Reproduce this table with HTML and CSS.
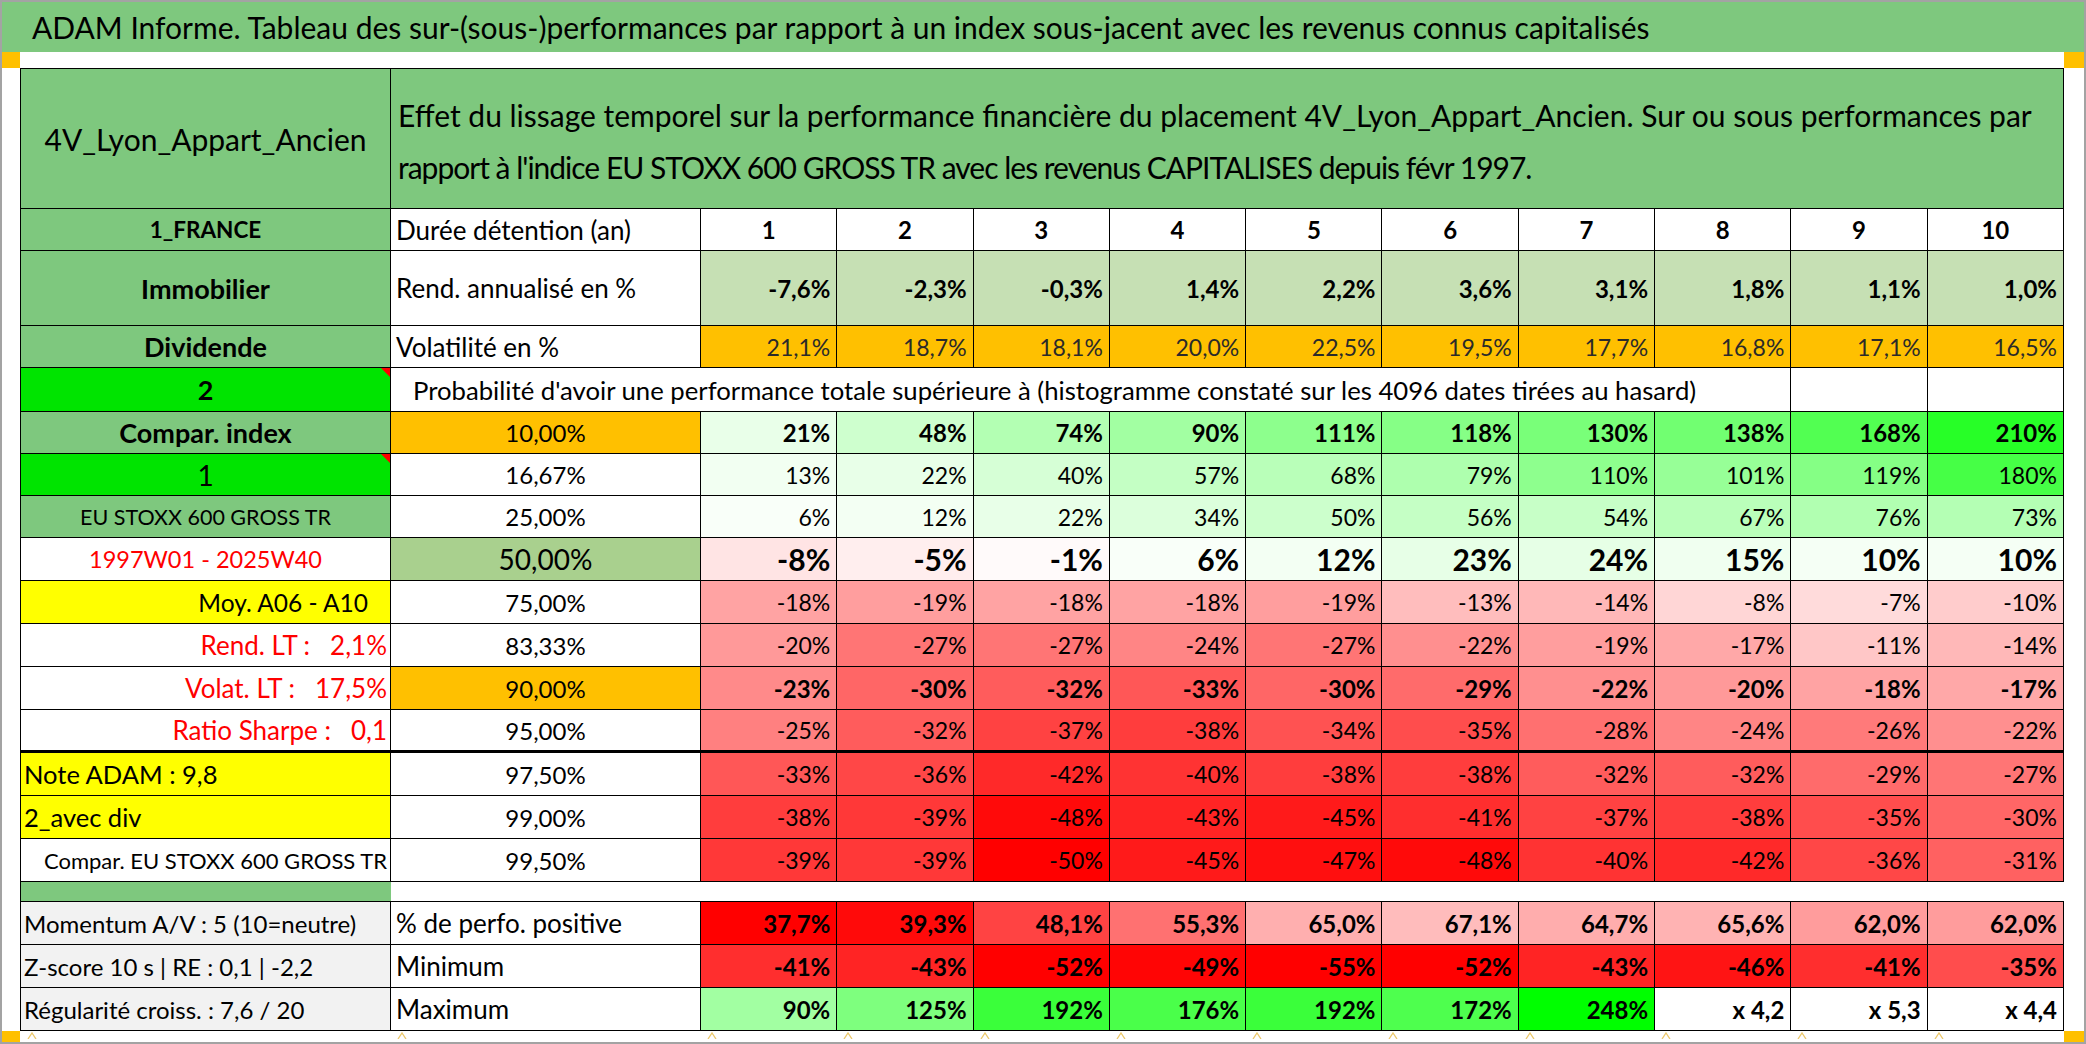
FILE: index.html
```html
<!DOCTYPE html>
<html lang="fr">
<head>
<meta charset="utf-8">
<title>ADAM Informe</title>
<link rel="stylesheet" href="styles.css">
</head>
<body>
<div class="page">
  <div class="title">ADAM Informe. Tableau des sur-(sous-)performances par rapport à un index sous-jacent avec les revenus connus capitalisés</div>
  <div class="band"><span class="corner"></span><span class="corner corner-r"></span></div>
  <div class="sheet">
    <!-- header -->
    <div class="c g ctr hdr-name">4V_Lyon_Appart_Ancien</div>
    <div class="c g hdr-desc"><span>Effet du lissage temporel sur la performance financière du placement 4V_Lyon_Appart_Ancien. Sur ou sous performances par</span><span class="l2">rapport à l'indice EU STOXX 600 GROSS TR avec les revenus CAPITALISES depuis févr 1997.</span></div>

    <!-- Durée -->
    <div class="c g ctr lb small">1_FRANCE</div>
    <div class="c l lab2">Durée détention (an)</div>
    <div class="c ctr hn">1</div><div class="c ctr hn">2</div><div class="c ctr hn">3</div><div class="c ctr hn">4</div><div class="c ctr hn">5</div>
    <div class="c ctr hn">6</div><div class="c ctr hn">7</div><div class="c ctr hn">8</div><div class="c ctr hn">9</div><div class="c ctr hn">10</div>

    <!-- Rend -->
    <div class="c g ctr lb">Immobilier</div>
    <div class="c l lab2">Rend. annualisé en %</div>
    <div class="c d b lg">-7,6%</div><div class="c d b lg">-2,3%</div><div class="c d b lg">-0,3%</div><div class="c d b lg">1,4%</div><div class="c d b lg">2,2%</div>
    <div class="c d b lg">3,6%</div><div class="c d b lg">3,1%</div><div class="c d b lg">1,8%</div><div class="c d b lg">1,1%</div><div class="c d b lg">1,0%</div>

    <!-- Vol -->
    <div class="c g ctr lb">Dividende</div>
    <div class="c l lab2">Volatilité en %</div>
    <div class="c d or vt">21,1%</div><div class="c d or vt">18,7%</div><div class="c d or vt">18,1%</div><div class="c d or vt">20,0%</div><div class="c d or vt">22,5%</div>
    <div class="c d or vt">19,5%</div><div class="c d or vt">17,7%</div><div class="c d or vt">16,8%</div><div class="c d or vt">17,1%</div><div class="c d or vt">16,5%</div>

    <!-- Prob -->
    <div class="c bg ctr lb tri">2</div>
    <div class="c prob">Probabilité d'avoir une performance totale supérieure à (histogramme constaté sur les 4096 dates tirées au hasard)</div>
    <div class="c"></div><div class="c"></div>

    <!-- Compar index -->
    <div class="c g ctr lb">Compar. index</div>
    <div class="c ctr pct or">10,00%</div>
    <div class="c d b" style="background:rgb(233,255,233)">21%</div>
    <div class="c d b" style="background:rgb(206,255,206)">48%</div>
    <div class="c d b" style="background:rgb(179,255,179)">74%</div>
    <div class="c d b" style="background:rgb(162,255,162)">90%</div>
    <div class="c d b" style="background:rgb(141,255,141)">111%</div>
    <div class="c d b" style="background:rgb(134,255,134)">118%</div>
    <div class="c d b" style="background:rgb(121,255,121)">130%</div>
    <div class="c d b" style="background:rgb(113,255,113)">138%</div>
    <div class="c d b" style="background:rgb(82,255,82)">168%</div>
    <div class="c d b" style="background:rgb(39,255,39)">210%</div>

    <!-- 1 -->
    <div class="c bg ctr lb1 tri">1</div>
    <div class="c ctr pct">16,67%</div>
    <div class="c d" style="background:rgb(242,255,242)">13%</div>
    <div class="c d" style="background:rgb(232,255,232)">22%</div>
    <div class="c d" style="background:rgb(214,255,214)">40%</div>
    <div class="c d" style="background:rgb(196,255,196)">57%</div>
    <div class="c d" style="background:rgb(185,255,185)">68%</div>
    <div class="c d" style="background:rgb(174,255,174)">79%</div>
    <div class="c d" style="background:rgb(142,255,142)">110%</div>
    <div class="c d" style="background:rgb(151,255,151)">101%</div>
    <div class="c d" style="background:rgb(133,255,133)">119%</div>
    <div class="c d" style="background:rgb(70,255,70)">180%</div>

    <!-- EU -->
    <div class="c g ctr eu">EU STOXX 600 GROSS TR</div>
    <div class="c ctr pct">25,00%</div>
    <div class="c d" style="background:rgb(249,255,249)">6%</div>
    <div class="c d" style="background:rgb(243,255,243)">12%</div>
    <div class="c d" style="background:rgb(232,255,232)">22%</div>
    <div class="c d" style="background:rgb(220,255,220)">34%</div>
    <div class="c d" style="background:rgb(204,255,204)">50%</div>
    <div class="c d" style="background:rgb(197,255,197)">56%</div>
    <div class="c d" style="background:rgb(199,255,199)">54%</div>
    <div class="c d" style="background:rgb(186,255,186)">67%</div>
    <div class="c d" style="background:rgb(177,255,177)">76%</div>
    <div class="c d" style="background:rgb(180,255,180)">73%</div>

    <!-- 1997 -->
    <div class="c ctr red yr">1997W01 - 2025W40</div>
    <div class="c ctr pct big-pct mg">50,00%</div>
    <div class="c d big" style="background:rgb(255,228,228)">-8%</div>
    <div class="c d big" style="background:rgb(255,238,238)">-5%</div>
    <div class="c d big" style="background:rgb(255,250,250)">-1%</div>
    <div class="c d big" style="background:rgb(249,255,249)">6%</div>
    <div class="c d big" style="background:rgb(243,255,243)">12%</div>
    <div class="c d big" style="background:rgb(231,255,231)">23%</div>
    <div class="c d big" style="background:rgb(230,255,230)">24%</div>
    <div class="c d big" style="background:rgb(240,255,240)">15%</div>
    <div class="c d big" style="background:rgb(245,255,245)">10%</div>
    <div class="c d big" style="background:rgb(245,255,245)">10%</div>

    <!-- Moy -->
    <div class="c yl r moy">Moy. A06 - A10</div>
    <div class="c ctr pct">75,00%</div>
    <div class="c d" style="background:rgb(255,163,163)">-18%</div>
    <div class="c d" style="background:rgb(255,158,158)">-19%</div>
    <div class="c d" style="background:rgb(255,163,163)">-18%</div>
    <div class="c d" style="background:rgb(255,163,163)">-18%</div>
    <div class="c d" style="background:rgb(255,158,158)">-19%</div>
    <div class="c d" style="background:rgb(255,189,189)">-13%</div>
    <div class="c d" style="background:rgb(255,184,184)">-14%</div>
    <div class="c d" style="background:rgb(255,214,214)">-8%</div>
    <div class="c d" style="background:rgb(255,219,219)">-7%</div>
    <div class="c d" style="background:rgb(255,204,204)">-10%</div>

    <!-- Rend LT -->
    <div class="c r red lr">Rend. LT :   2,1%</div>
    <div class="c ctr pct">83,33%</div>
    <div class="c d" style="background:rgb(255,153,153)">-20%</div>
    <div class="c d" style="background:rgb(255,117,117)">-27%</div>
    <div class="c d" style="background:rgb(255,117,117)">-27%</div>
    <div class="c d" style="background:rgb(255,133,133)">-24%</div>
    <div class="c d" style="background:rgb(255,117,117)">-27%</div>
    <div class="c d" style="background:rgb(255,143,143)">-22%</div>
    <div class="c d" style="background:rgb(255,158,158)">-19%</div>
    <div class="c d" style="background:rgb(255,168,168)">-17%</div>
    <div class="c d" style="background:rgb(255,199,199)">-11%</div>
    <div class="c d" style="background:rgb(255,184,184)">-14%</div>

    <!-- Volat LT -->
    <div class="c r red lr">Volat. LT :   17,5%</div>
    <div class="c ctr pct or">90,00%</div>
    <div class="c d b" style="background:rgb(255,138,138)">-23%</div>
    <div class="c d b" style="background:rgb(255,102,102)">-30%</div>
    <div class="c d b" style="background:rgb(255,92,92)">-32%</div>
    <div class="c d b" style="background:rgb(255,87,87)">-33%</div>
    <div class="c d b" style="background:rgb(255,102,102)">-30%</div>
    <div class="c d b" style="background:rgb(255,107,107)">-29%</div>
    <div class="c d b" style="background:rgb(255,143,143)">-22%</div>
    <div class="c d b" style="background:rgb(255,153,153)">-20%</div>
    <div class="c d b" style="background:rgb(255,163,163)">-18%</div>
    <div class="c d b" style="background:rgb(255,168,168)">-17%</div>

    <!-- Sharpe -->
    <div class="c r red lr thick">Ratio Sharpe :   0,1</div>
    <div class="c ctr pct thick">95,00%</div>
    <div class="c d thick" style="background:rgb(255,128,128)">-25%</div>
    <div class="c d thick" style="background:rgb(255,92,92)">-32%</div>
    <div class="c d thick" style="background:rgb(255,66,66)">-37%</div>
    <div class="c d thick" style="background:rgb(255,61,61)">-38%</div>
    <div class="c d thick" style="background:rgb(255,82,82)">-34%</div>
    <div class="c d thick" style="background:rgb(255,77,77)">-35%</div>
    <div class="c d thick" style="background:rgb(255,112,112)">-28%</div>
    <div class="c d thick" style="background:rgb(255,133,133)">-24%</div>
    <div class="c d thick" style="background:rgb(255,122,122)">-26%</div>
    <div class="c d thick" style="background:rgb(255,143,143)">-22%</div>

    <!-- Note -->
    <div class="c yl l note">Note ADAM : 9,8</div>
    <div class="c ctr pct">97,50%</div>
    <div class="c d" style="background:rgb(255,87,87)">-33%</div>
    <div class="c d" style="background:rgb(255,71,71)">-36%</div>
    <div class="c d" style="background:rgb(255,41,41)">-42%</div>
    <div class="c d" style="background:rgb(255,51,51)">-40%</div>
    <div class="c d" style="background:rgb(255,61,61)">-38%</div>
    <div class="c d" style="background:rgb(255,61,61)">-38%</div>
    <div class="c d" style="background:rgb(255,92,92)">-32%</div>
    <div class="c d" style="background:rgb(255,92,92)">-32%</div>
    <div class="c d" style="background:rgb(255,107,107)">-29%</div>
    <div class="c d" style="background:rgb(255,117,117)">-27%</div>

    <!-- 2_avec div -->
    <div class="c yl l note">2_avec div</div>
    <div class="c ctr pct">99,00%</div>
    <div class="c d" style="background:rgb(255,61,61)">-38%</div>
    <div class="c d" style="background:rgb(255,56,56)">-39%</div>
    <div class="c d" style="background:rgb(255,10,10)">-48%</div>
    <div class="c d" style="background:rgb(255,36,36)">-43%</div>
    <div class="c d" style="background:rgb(255,26,26)">-45%</div>
    <div class="c d" style="background:rgb(255,46,46)">-41%</div>
    <div class="c d" style="background:rgb(255,66,66)">-37%</div>
    <div class="c d" style="background:rgb(255,61,61)">-38%</div>
    <div class="c d" style="background:rgb(255,77,77)">-35%</div>
    <div class="c d" style="background:rgb(255,102,102)">-30%</div>

    <!-- Compar EU -->
    <div class="c r cmp">Compar. EU STOXX 600 GROSS TR</div>
    <div class="c ctr pct">99,50%</div>
    <div class="c d" style="background:rgb(255,56,56)">-39%</div>
    <div class="c d" style="background:rgb(255,56,56)">-39%</div>
    <div class="c d" style="background:rgb(255,0,0)">-50%</div>
    <div class="c d" style="background:rgb(255,26,26)">-45%</div>
    <div class="c d" style="background:rgb(255,15,15)">-47%</div>
    <div class="c d" style="background:rgb(255,10,10)">-48%</div>
    <div class="c d" style="background:rgb(255,51,51)">-40%</div>
    <div class="c d" style="background:rgb(255,41,41)">-42%</div>
    <div class="c d" style="background:rgb(255,71,71)">-36%</div>
    <div class="c d" style="background:rgb(255,97,97)">-31%</div>

    <!-- spacer row -->
    <div class="gap-g"></div>
    <div class="gap-w"></div>

    <!-- Momentum -->
    <div class="c gr l bl">Momentum A/V : 5 (10=neutre)</div>
    <div class="c l lab2">% de perfo. positive</div>
    <div class="c d b" style="background:rgb(255,0,0)">37,7%</div>
    <div class="c d b" style="background:rgb(255,10,10)">39,3%</div>
    <div class="c d b" style="background:rgb(255,67,67)">48,1%</div>
    <div class="c d b" style="background:rgb(255,113,113)">55,3%</div>
    <div class="c d b" style="background:rgb(255,175,175)">65,0%</div>
    <div class="c d b" style="background:rgb(255,188,188)">67,1%</div>
    <div class="c d b" style="background:rgb(255,173,173)">64,7%</div>
    <div class="c d b" style="background:rgb(255,179,179)">65,6%</div>
    <div class="c d b" style="background:rgb(255,156,156)">62,0%</div>
    <div class="c d b" style="background:rgb(255,156,156)">62,0%</div>

    <!-- Minimum -->
    <div class="c gr l bl">Z-score 10 s | RE : 0,1 | -2,2</div>
    <div class="c l lab2">Minimum</div>
    <div class="c d b" style="background:rgb(255,46,46)">-41%</div>
    <div class="c d b" style="background:rgb(255,36,36)">-43%</div>
    <div class="c d b" style="background:rgb(255,0,0)">-52%</div>
    <div class="c d b" style="background:rgb(255,5,5)">-49%</div>
    <div class="c d b" style="background:rgb(255,0,0)">-55%</div>
    <div class="c d b" style="background:rgb(255,0,0)">-52%</div>
    <div class="c d b" style="background:rgb(255,36,36)">-43%</div>
    <div class="c d b" style="background:rgb(255,20,20)">-46%</div>
    <div class="c d b" style="background:rgb(255,46,46)">-41%</div>
    <div class="c d b" style="background:rgb(255,77,77)">-35%</div>

    <!-- Maximum -->
    <div class="c gr l bl">Régularité croiss. : 7,6 / 20</div>
    <div class="c l lab2">Maximum</div>
    <div class="c d b" style="background:rgb(162,255,162)">90%</div>
    <div class="c d b" style="background:rgb(126,255,126)">125%</div>
    <div class="c d b" style="background:rgb(58,255,58)">192%</div>
    <div class="c d b" style="background:rgb(74,255,74)">176%</div>
    <div class="c d b" style="background:rgb(58,255,58)">192%</div>
    <div class="c d b" style="background:rgb(78,255,78)">172%</div>
    <div class="c d b" style="background:rgb(0,255,0)">248%</div>
    <div class="c d b">x 4,2</div>
    <div class="c d b">x 5,3</div>
    <div class="c d b">x 4,4</div>
  </div>
  <div class="band-bottom">
    <span class="corner"></span>
    <span class="tick"><svg width="10" height="7" viewBox="0 0 10 7"><polyline points="1,7 5,1 9,7"/></svg></span>
    <span class="tick"><svg width="10" height="7" viewBox="0 0 10 7"><polyline points="1,7 5,1 9,7"/></svg></span>
    <span class="tick"><svg width="10" height="7" viewBox="0 0 10 7"><polyline points="1,7 5,1 9,7"/></svg></span>
    <span class="tick"><svg width="10" height="7" viewBox="0 0 10 7"><polyline points="1,7 5,1 9,7"/></svg></span>
    <span class="tick"><svg width="10" height="7" viewBox="0 0 10 7"><polyline points="1,7 5,1 9,7"/></svg></span>
    <span class="tick"><svg width="10" height="7" viewBox="0 0 10 7"><polyline points="1,7 5,1 9,7"/></svg></span>
    <span class="tick"><svg width="10" height="7" viewBox="0 0 10 7"><polyline points="1,7 5,1 9,7"/></svg></span>
    <span class="tick"><svg width="10" height="7" viewBox="0 0 10 7"><polyline points="1,7 5,1 9,7"/></svg></span>
    <span class="tick"><svg width="10" height="7" viewBox="0 0 10 7"><polyline points="1,7 5,1 9,7"/></svg></span>
    <span class="tick"><svg width="10" height="7" viewBox="0 0 10 7"><polyline points="1,7 5,1 9,7"/></svg></span>
    <span class="tick"><svg width="10" height="7" viewBox="0 0 10 7"><polyline points="1,7 5,1 9,7"/></svg></span>
    <span class="tick"><svg width="10" height="7" viewBox="0 0 10 7"><polyline points="1,7 5,1 9,7"/></svg></span>
    <span class="corner corner-r"></span>
  </div>
</div>
</body>
</html>
```

FILE: styles.css
```css
* { box-sizing: border-box; }
html, body { margin: 0; padding: 0; background: #fff; }
body { font-family: Lato, "Open Sans", "Liberation Sans", sans-serif; color: #000; }

.page {
  width: 2086px;
  height: 1044px;
  border: 2px solid #a3a3a3;
  display: flex;
  flex-direction: column;
  overflow: hidden;
  background: #fff;
}

.title {
  flex: 0 0 50px;
  background: #7ec87e;
  display: flex;
  align-items: center;
  padding-left: 30px;
  font-size: 30px;
  white-space: nowrap;
}

.band { flex: 0 0 16px; display: flex; justify-content: space-between; }
.corner { display: block; width: 18px; background: #ffc000; }
.corner-r { width: 20px; }

.sheet {
  margin-left: 18px;
  width: 2044px;
  display: grid;
  grid-template-columns: 370px 310px repeat(10, 136.3px);
  grid-template-rows: 140px 42px 75px 42px 44px 42px 42px 42px repeat(8, 43px) 20px 43px 43px 43px;
  border-top: 1px solid #000;
  border-left: 1px solid #000;
}

.c {
  border-right: 1px solid #000;
  border-bottom: 1px solid #000;
  display: flex;
  align-items: center;
  white-space: pre;
  overflow: hidden;
  position: relative;
  background: #fff;
}
.ctr { justify-content: center; }
.l { justify-content: flex-start; padding-left: 5px; }
.r { justify-content: flex-end; padding-right: 3px; }

.g { background: #7ec87e; }
.bg { background: #00e400; }
.or { background: #ffc000; }
.lg { background: #c6e0b4; }
.mg { background: #a9d08e; }
.yl { background: #ffff00; }
.gr { background: #f2f2f2; }
.red { color: #ff0000; }

.hdr-name { font-size: 30px; }
.hdr-desc {
  grid-column: 2 / -1;
  flex-direction: column;
  align-items: flex-start;
  justify-content: center;
  padding-left: 7px;
  padding-top: 4px;
  font-size: 30px;
  line-height: 52px;
  white-space: nowrap;
}
.l2 { letter-spacing: -1px; }

.lb { font-size: 27px; font-weight: 700; }
.lb.small { font-size: 22.5px; }
.lb1 { font-size: 28px; }
.eu { font-size: 21.5px; }
.yr { font-size: 23.5px; }
.lr { font-size: 26px; }
.moy { font-size: 24.5px; padding-right: 22px; }
.note { font-size: 25.5px; padding-left: 3px; }
.cmp { font-size: 22px; }
.bl { font-size: 24px; padding-left: 3px; }
.lab2 { font-size: 26px; }
.hn { font-size: 24px; font-weight: 700; }

.prob {
  grid-column: 2 / span 9;
  padding-left: 22px;
  font-size: 25.7px;
}

.pct { font-size: 24px; }
.big-pct { font-size: 28px; }

.d { justify-content: flex-end; padding-right: 6px; font-size: 23px; }
.b { font-weight: 700; font-size: 24px; }
.vt { color: #2a2a2a; }
.big { font-weight: 700; font-size: 30px; }

.thick { border-bottom-width: 3px; }

.tri::after {
  content: "";
  position: absolute;
  top: 0;
  right: 0;
  border-style: solid;
  border-width: 0 9px 9px 0;
  border-color: transparent #ff0000 transparent transparent;
}

.gap-g { background: #7ec87e; border-bottom: 1px solid #000; }
.gap-w { grid-column: 2 / -1; border-bottom: 1px solid #000; }

.band-bottom {
  flex: 1;
  display: grid;
  grid-template-columns: 19px 370px 310px repeat(10, 136.3px) 1fr;
}
.band-bottom .corner-r { justify-self: end; }
.tick { display: block; padding-left: 6px; padding-top: 1px; }
.tick svg { display: block; }
.tick polyline { fill: none; stroke: #ecc86a; stroke-width: 1.3; }
```
